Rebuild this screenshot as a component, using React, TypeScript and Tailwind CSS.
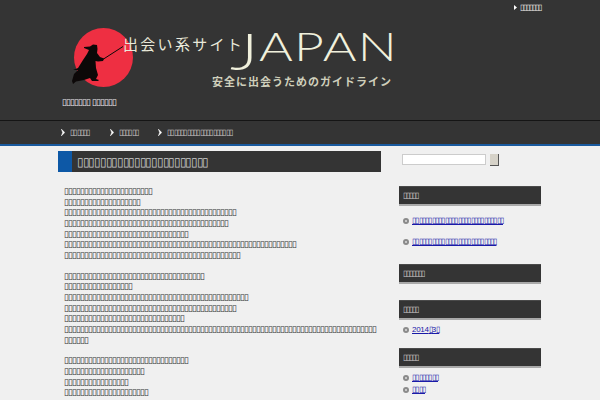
const T = (n: number) => "\u25AF".repeat(n);

const para1 = [22, 19, 43, 41, 31, 58, 44];
const para2 = [35, 17, 46, 43, 30, 78, 6];
const para3 = [31, 20, 16, 21, 21];

function Para({ rows, className }: { rows: number[]; className?: string }) {
  return (
    <div className={className}>
      {rows.map((n, i) => (
        <div key={i} className="h-[10.67px] leading-[10.67px] whitespace-nowrap">{T(n)}</div>
      ))}
    </div>
  );
}

function Heading({ n, className }: { n: number; className?: string }) {
  return (
    <div className={"h-[20px] bg-[#343434] border-t border-t-[#4a4a4a] border-b-2 border-b-[#a9a9a9] pl-[4px] flex items-center text-[8px] tracking-[-1px] text-[#ccc] " + (className ?? "")}>
      {T(n)}
    </div>
  );
}

function Bullet() {
  return (
    <span className="w-[6px] h-[6px] rounded-full bg-[#8a8a8a] flex items-center justify-center shrink-0">
      <span className="w-[2px] h-[2px] rounded-full bg-[#ddd]" />
    </span>
  );
}

function LinkRow({ children, className }: { children: React.ReactNode; className?: string }) {
  return (
    <div className={"flex items-center gap-[3px] pl-[4px] h-[11px] " + (className ?? "")}>
      <Bullet />
      <a href="#" className="text-[8px] tracking-[-0.75px] text-[#1a1aa8] underline whitespace-nowrap">{children}</a>
    </div>
  );
}

function NavItem({ n }: { n: number }) {
  return (
    <div className="flex items-center gap-[5px]">
      <svg width="4" height="7" viewBox="0 0 4 7"><path d="M0.3 0 L3.8 3.5 L0.3 7 L1.6 3.5 Z" fill="#fff" stroke="#fff" strokeWidth="0.4" /></svg>
      <span className="text-[8px] tracking-[-0.75px] text-[#ccc] whitespace-nowrap">{T(n)}</span>
    </div>
  );
}

export default function App() {
  return (
    <div className="w-[600px] h-[400px] overflow-hidden bg-[#f0f0f0] font-['Liberation_Sans',sans-serif] text-[#333]">
      <header className="h-[120px] bg-[#343434] flex flex-col">
        <div className="h-[25px] flex justify-end items-start pt-[3px] pr-[59px]">
          <div className="flex items-center gap-[3px]">
            <svg width="3" height="5" viewBox="0 0 3 5"><path d="M0 0 L3 2.5 L0 5 Z" fill="#fff" /></svg>
            <span className="text-[8px] tracking-[-1px] leading-[9px] text-[#eee] whitespace-nowrap">{T(7)}</span>
          </div>
        </div>
        <div className="relative ml-[70px] w-[330px] h-[72px]">
          <svg className="absolute left-0 top-0" width="330" height="72" viewBox="70 25 330 72">
            <circle cx="103.5" cy="57.5" r="29.5" fill="#ee2f42" />
            <path d="M84 47 L90 46.5 L93 44.5 L97 45 L97.5 49 L97 53 L100 57 L104 58.5 L103 61 L98 61.5 L95.5 61 L96 68 L98 75 L96 79 L99 80 L98 81 L92 81 L90 78 L84 80 L76 81.5 L73 84 L72 81 L74 74 L78 70 L73 70 L78 68 L83 60 L87 54 L89 50 L84 48 Z" fill="#0c0808" />
            <path d="M102 60 L123 46.5" stroke="#0c0808" strokeWidth="1" />
          </svg>
          <span className="absolute left-[53px] top-[9px] text-[15px] leading-[20px] tracking-[2.3px] text-[#e9e9da] whitespace-nowrap font-['Noto_Sans_CJK_JP',sans-serif]">出会い系サイト</span>
          <span className="absolute left-[160px] top-[-6px] text-[52px] leading-[62px] font-light text-[#f0f0dc] font-['Lato',sans-serif] scale-x-[1.3] origin-left">J</span>
          <span className="absolute left-[189px] top-[-4px] text-[40px] leading-[50px] font-light tracking-[1px] text-[#f0f0dc] font-['Lato',sans-serif] whitespace-nowrap scale-x-[1.29] origin-left">APAN</span>
          <span className="absolute left-[142px] top-[48px] text-[11px] leading-[16px] tracking-[1px] font-bold text-[#cfcfbb] whitespace-nowrap font-['Noto_Sans_CJK_JP',sans-serif]">安全に出会うためのガイドライン</span>
        </div>
        <div className="pl-[62px] pt-[0px] text-[9px] tracking-[-1px] leading-[11px] text-[#eee] whitespace-nowrap">{T(7)} {T(6)}</div>
      </header>
      <nav className="h-[26px] bg-[#343434] border-t border-t-[#151515] border-b-2 border-b-[#1a5a9e] flex items-center gap-[20px] pl-[61px]">
        <NavItem n={6} />
        <NavItem n={6} />
        <NavItem n={20} />
      </nav>
      <div className="ml-[58px] w-[483px] flex gap-[18px] pt-[5px]">
        <main className="w-[323px] shrink-0">
          <div className="h-[21px] flex bg-[#343434]">
            <div className="w-[14px] bg-[#0d58a6]" />
            <h1 className="pl-[5px] flex items-center text-[12px] tracking-[-1.3px] font-normal text-[#ccc] whitespace-nowrap">{T(23)}</h1>
          </div>
          <div className="pt-[14px] pl-[6px] text-[9px] tracking-[-1px]">
            <Para rows={para1} className="mb-[10px]" />
            <Para rows={para2} className="mb-[10px]" />
            <Para rows={para3} />
          </div>
        </main>
        <aside className="w-[142px] shrink-0">
          <div className="h-[29px] flex items-start gap-[4px] pl-[3px] pt-[3px]">
            <div className="w-[84px] h-[11px] bg-white border border-[#ccc]" />
            <div className="w-[9px] h-[12px] bg-[#d6d2c8] border-r border-b border-r-[#555] border-b-[#555]" />
          </div>
          <Heading n={5} className="mt-[6px]" />
          <LinkRow className="mt-[9px]">{T(28)}</LinkRow>
          <LinkRow className="mt-[10px]">{T(26)}</LinkRow>
          <Heading n={7} className="mt-[17px]" />
          <Heading n={5} className="mt-[16px]" />
          <LinkRow className="mt-[4.5px]"><span className="tracking-[-0.3px]">2014</span>{T(1)}<span className="tracking-[-0.3px]">3</span>{T(1)}</LinkRow>
          <Heading n={5} className="mt-[12.5px]" />
          <LinkRow className="mt-[4.5px]">{T(8)}</LinkRow>
          <LinkRow className="mt-[1px]">{T(4)}</LinkRow>
        </aside>
      </div>
    </div>
  );
}
